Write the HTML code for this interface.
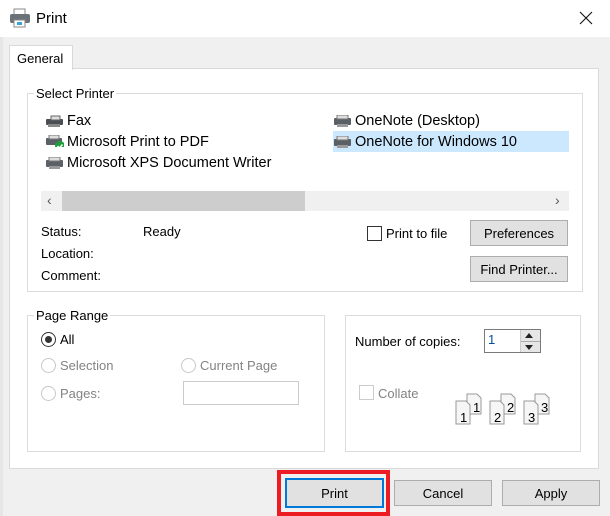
<!DOCTYPE html>
<html><head><meta charset="utf-8"><style>
*{margin:0;padding:0;box-sizing:border-box}
body{width:610px;height:516px;background:#f0f0f0;font-family:"Liberation Sans",sans-serif;font-size:13px;color:#000;position:relative;overflow:hidden}
.a{position:absolute}
.title{left:0;top:0;width:610px;height:37px;background:#fff}
.panel{left:9px;top:68px;width:590px;height:401px;background:#fff;border:1px solid #d9d9d9}
.tab{left:9px;top:45px;width:64px;height:25px;background:#fff;border:1px solid #d9d9d9;border-bottom:none;padding:5px 0 0 7px;font-size:13px}
.grp{border:1px solid #dcdcdc}
.lg{background:#fff;padding:0 2px;font-size:13px}
.pl{font-size:14.5px}
.btn{background:#e1e1e1;border:1px solid #adadad;text-align:center;font-size:13px}
.dis{color:#838383}
.rad{width:15px;height:15px;border:1px solid #c8c8c8;border-radius:50%;background:#fff}
.ico{width:18px;height:12px}
</style></head><body>
<div class="a title"></div>
<div class="a" style="left:0;top:37px;width:3px;height:479px;background:#e6e6e6"></div>
<svg class="a" style="left:9px;top:8px" width="22" height="20"><rect x="5" y="1" width="11" height="6" fill="#fff" stroke="#888"/><rect x="1" y="6" width="20" height="9" rx="2" fill="#6b7378"/><rect x="5" y="12" width="11" height="7" fill="#fff" stroke="#888"/><rect x="8" y="14" width="5" height="3" fill="#3aa3d8"/></svg>
<div class="a" style="left:36px;top:10px;font-size:15px">Print</div>
<svg class="a" style="left:579px;top:11px" width="14" height="14"><path d="M1 1L13 13M13 1L1 13" stroke="#111" stroke-width="1.1"/></svg>
<div class="a panel"></div>
<div class="a tab">General</div>

<div class="a grp" style="left:27px;top:93px;width:556px;height:199px"></div>
<div class="a lg" style="left:34px;top:86px">Select Printer</div>
<svg class="a ico" style="left:46px;top:115px" width="18" height="12"><rect x="0" y="4" width="17" height="6" rx="1" fill="#4a4f55"/><rect x="5" y="1" width="9" height="4" fill="#ddd" stroke="#666"/><rect x="2" y="9" width="12" height="3" fill="#888"/></svg>
<div class="a pl" style="left:67px;top:113px">Fax</div>
<svg class="a ico" style="left:46px;top:135px" width="20" height="16"><rect x="0" y="3" width="16" height="7" rx="1" fill="#5a6066"/><rect x="3" y="0" width="10" height="4" fill="#ddd" stroke="#777"/><circle cx="14" cy="11" r="5" fill="#1e9e3a"/><path d="M11.5 11l2 2 3-3.5" stroke="#fff" stroke-width="1.5" fill="none"/></svg>
<div class="a pl" style="left:67px;top:134px">Microsoft Print to PDF</div>
<svg class="a ico" style="left:46px;top:157px" width="18" height="12"><rect x="0" y="3" width="17" height="7" rx="1" fill="#5a6066"/><rect x="3" y="0" width="11" height="4" fill="#ddd" stroke="#777"/><rect x="3" y="9" width="11" height="3" fill="#999"/></svg>
<div class="a pl" style="left:67px;top:155px">Microsoft XPS Document Writer</div>
<svg class="a ico" style="left:334px;top:115px" width="18" height="12"><rect x="0" y="3" width="17" height="7" rx="1" fill="#5a6066"/><rect x="3" y="0" width="11" height="4" fill="#ddd" stroke="#777"/><rect x="3" y="9" width="11" height="3" fill="#999"/></svg>
<div class="a pl" style="left:355px;top:113px">OneNote (Desktop)</div>
<div class="a" style="left:333px;top:131px;width:236px;height:21px;background:#cce8ff"></div>
<svg class="a ico" style="left:334px;top:136px" width="18" height="12"><rect x="0" y="3" width="17" height="7" rx="1" fill="#5a6066"/><rect x="3" y="0" width="11" height="4" fill="#ddd" stroke="#777"/><rect x="3" y="9" width="11" height="3" fill="#999"/></svg>
<div class="a pl" style="left:355px;top:134px">OneNote for Windows 10</div>

<div class="a" style="left:41px;top:191px;width:528px;height:20px;background:#f0f0f0"></div>
<div class="a" style="left:62px;top:191px;width:243px;height:20px;background:#cdcdcd"></div>
<div class="a" style="left:47px;top:192px;font-size:14px;color:#555">‹</div>
<div class="a" style="left:555px;top:192px;font-size:14px;color:#555">›</div>

<div class="a" style="left:41px;top:224px">Status:</div>
<div class="a" style="left:143px;top:224px;font-size:13px">Ready</div>
<div class="a" style="left:41px;top:246px">Location:</div>
<div class="a" style="left:41px;top:268px">Comment:</div>
<div class="a" style="left:367px;top:226px;width:15px;height:15px;border:1px solid #333;background:#fff"></div>
<div class="a" style="left:386px;top:226px">Print to file</div>
<div class="a btn" style="left:470px;top:220px;width:98px;height:26px;padding-top:5px">Preferences</div>
<div class="a btn" style="left:470px;top:256px;width:98px;height:26px;padding-top:5px">Find Printer...</div>

<div class="a grp" style="left:27px;top:315px;width:298px;height:137px"></div>
<div class="a lg" style="left:34px;top:308px">Page Range</div>
<div class="a rad" style="left:41px;top:332px;border-color:#333"></div>
<div class="a" style="left:45px;top:336px;width:7px;height:7px;border-radius:50%;background:#333"></div>
<div class="a" style="left:60px;top:332px;font-size:13px">All</div>
<div class="a rad" style="left:41px;top:358px"></div>
<div class="a dis" style="left:60px;top:358px;font-size:13px">Selection</div>
<div class="a rad" style="left:181px;top:358px"></div>
<div class="a dis" style="left:200px;top:358px;font-size:13px">Current Page</div>
<div class="a rad" style="left:41px;top:386px"></div>
<div class="a dis" style="left:60px;top:386px;font-size:13px">Pages:</div>
<div class="a" style="left:183px;top:381px;width:116px;height:24px;border:1px solid #ccc;background:#fff"></div>

<div class="a grp" style="left:345px;top:315px;width:236px;height:137px"></div>
<div class="a" style="left:355px;top:334px;font-size:13px">Number of copies:</div>
<div class="a" style="left:484px;top:329px;width:57px;height:24px;border:1px solid #7a7a7a;background:#fff"></div>
<div class="a" style="left:488px;top:332px;font-size:13px;color:#0050a0">1</div>
<div class="a" style="left:520px;top:330px;width:20px;height:22px;background:#e6e6e6;border-left:1px solid #ccc"></div>
<div class="a" style="left:525px;top:333px;border:4px solid transparent;border-bottom:5px solid #222;border-top:0"></div>
<div class="a" style="left:521px;top:341px;width:19px;height:1px;background:#aaa"></div>
<div class="a" style="left:525px;top:345px;border:4px solid transparent;border-top:5px solid #222;border-bottom:0"></div>
<div class="a" style="left:359px;top:385px;width:15px;height:15px;border:1px solid #ccc;background:#fff"></div>
<div class="a dis" style="left:378px;top:386px;font-size:13px">Collate</div>
<svg class="a" style="left:455px;top:393px" width="100" height="32">
<g font-family="Liberation Sans" font-size="13" fill="#000">
<g><path d="M12 1h10l4 4v16H12z" fill="#f6f6f6" stroke="#999"/><text x="18" y="19">1</text><path d="M1 8h10l4 4v19H1z" fill="#f6f6f6" stroke="#999"/><text x="5" y="29">1</text></g>
<g transform="translate(34,0)"><path d="M12 1h10l4 4v16H12z" fill="#f6f6f6" stroke="#999"/><text x="18" y="19">2</text><path d="M1 8h10l4 4v19H1z" fill="#f6f6f6" stroke="#999"/><text x="5" y="29">2</text></g>
<g transform="translate(68,0)"><path d="M12 1h10l4 4v16H12z" fill="#f6f6f6" stroke="#999"/><text x="18" y="19">3</text><path d="M1 8h10l4 4v19H1z" fill="#f6f6f6" stroke="#999"/><text x="5" y="29">3</text></g>
</g></svg>

<div class="a" style="left:277px;top:470px;width:113px;height:46px;border:4px solid #ed1c24"></div>
<div class="a btn" style="left:285px;top:478px;width:99px;height:30px;border:2px solid #0078d7;padding-top:6px">Print</div>
<div class="a btn" style="left:394px;top:480px;width:98px;height:26px;padding-top:5px">Cancel</div>
<div class="a btn" style="left:502px;top:480px;width:98px;height:26px;padding-top:5px">Apply</div>
</body></html>
